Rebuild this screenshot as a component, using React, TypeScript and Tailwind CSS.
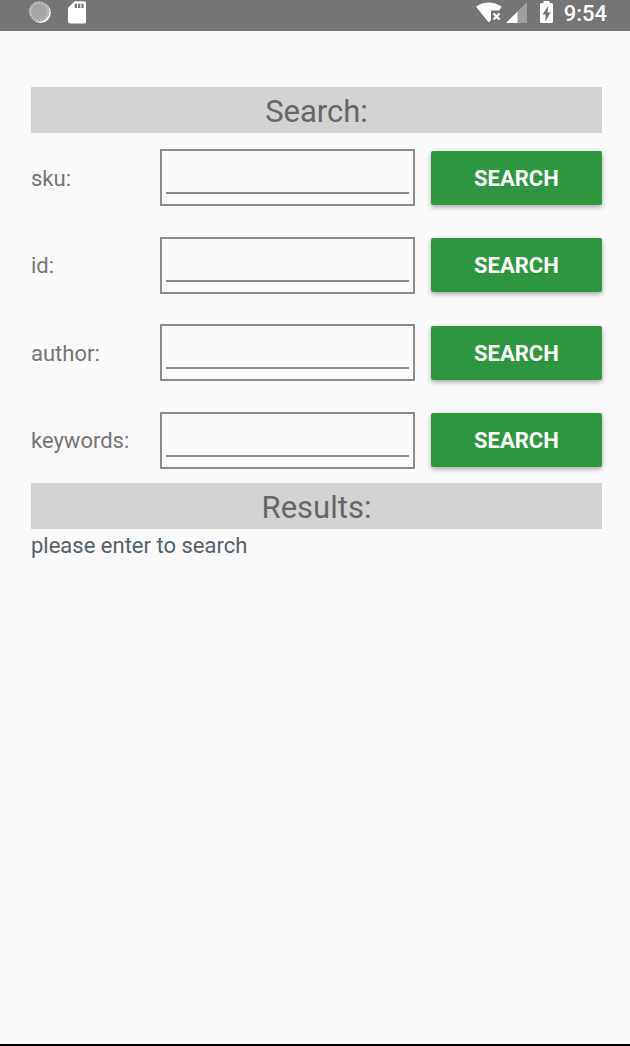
import { useState } from "react";

const fields = ["sku", "id", "author", "keywords"];

function StatusBar() {
  return (
    <header className="flex h-[31px] shrink-0 items-start justify-between bg-[#757575] pr-[23px] pl-7 text-white">
      <div className="flex items-start gap-3">
        <svg viewBox="0 0 24 24" className="h-6 w-6" aria-hidden="true">
          <circle cx="12.6" cy="12.8" r="10.200" fill="#fff" />
          <circle cx="11.2" cy="11.5" r="10.3" fill="#a5a5a5" />
          <circle cx="11.2" cy="11.5" r="8.8" fill="none" stroke="#c8c8c8" strokeWidth="2.4" strokeDasharray="1.3 1.6" />
        </svg>
        <svg viewBox="0 0 24 24" className="h-6 w-6" aria-hidden="true">
          <path fill="#fff" fillRule="evenodd" d="M10.500 1.300h9.700q1.800 0 1.800 1.800v18.600q0 1.900-1.900 1.900H6q-2 0-2-2V8zM10.800 3.700v4.400h2.200V3.700zm3.300 0v4.400h2.200V3.700zm3.300 0v4.400h2.200V3.700z" />
        </svg>
      </div>
      <div className="flex items-start">
        <svg viewBox="0 0 84 28" className="h-7 w-[84px]" aria-hidden="true">
          <path fill="#fff" d="M4 6.800C11 .9 22.500.9 29.700 6.800L27 10.500H19v9.500l-2.300 2.400z" />
          <path stroke="#fff" strokeWidth="2.2" d="m21.500 13.500 6 6m0-6-6 6" />
          <path fill="#9f9f9f" d="M55 2v21H34z" />
          <path fill="#fff" d="M45.500 11.500V23H34z" />
          <path fill="#fff" fillRule="evenodd" d="M71.500 1h6v2h2q1.500 0 1.500 1.500v17q0 1.500-1.500 1.500h-10q-1.500 0-1.500-1.500v-17Q68 3 69.500 3h2zM76.500 5.500l-6 9h3V21.500l5-9h-3z" />
        </svg>
        <time className="ml-2 text-[22px] leading-7 font-medium">9:54</time>
      </div>
    </header>
  );
}

function SectionTitle({ children }: { children: string }) {
  return (
    <h2 className="bg-[#d3d3d3] pt-1 text-center text-[31px] leading-[42px] text-[#666666]">{children}</h2>
  );
}

function SearchRow({ name }: { name: string }) {
  const [value, setValue] = useState("");
  return (
    <form className="flex h-[57px] items-center" onSubmit={(e) => e.preventDefault()}>
      <label htmlFor={name} className="w-[129px] shrink-0 pt-0.5 text-[22px] leading-7 text-[#757575]">
        {name}:
      </label>
      <div className="h-full min-w-0 flex-1 border-2 border-[#8a8a8a] px-1 pb-2.5">
        <input
          id={name}
          value={value}
          onChange={(e) => setValue(e.target.value)}
          className="block h-full w-full border-b-2 border-[#8a8a8a] bg-transparent text-[22px] text-[#333333] outline-none"
        />
      </div>
      <button
        type="submit"
        className="ml-4 h-[54px] w-[30%] shrink-0 rounded-xs bg-[#2e963f] pt-0.5 text-[22px] leading-7 font-bold text-white shadow-[0_2px_5px_rgba(0,0,0,0.35)]"
      >
        SEARCH
      </button>
    </form>
  );
}

export default function App() {
  return (
    <div className="flex min-h-screen flex-col border-b-2 border-black bg-[#fafafa] font-[Roboto,sans-serif]">
      <StatusBar />
      <main className="pt-14 pr-7 pl-[31px]">
        <section>
          <SectionTitle>Search:</SectionTitle>
          <div className="mt-4 mb-3.5 flex h-80 flex-col justify-between">
            {fields.map((name) => (
              <SearchRow key={name} name={name} />
            ))}
          </div>
        </section>
        <section>
          <SectionTitle>Results:</SectionTitle>
          <p className="pt-[3px] text-[22px] leading-7 text-[#56606b]">please enter to search</p>
        </section>
      </main>
    </div>
  );
}
